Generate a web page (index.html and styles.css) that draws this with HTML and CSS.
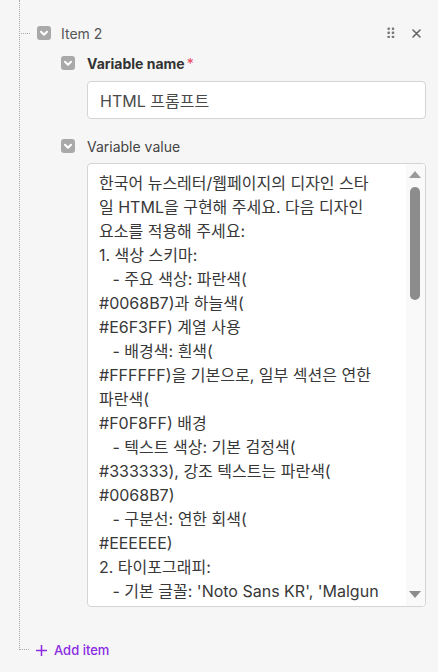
FILE: index.html
```html
<!DOCTYPE html>
<html lang="ko">
<head>
<meta charset="utf-8">
<title>Items</title>
<link rel="stylesheet" href="styles.css">
</head>
<body>
<div class="tree">
  <div class="item">
    <div class="item-head">
      <span class="check"><svg viewBox="0 0 14 14" width="14" height="14"><polyline points="4,5.7 7,8.7 10,5.7" fill="none" stroke="#fff" stroke-width="2" stroke-linecap="round" stroke-linejoin="round"/></svg></span>
      <span class="item-title">Item 2</span>
      <div class="actions">
        <svg class="drag" viewBox="0 0 8 12" width="8" height="12"><g fill="#7a7a7a"><rect x="0.5" y="0.5" width="2.4" height="2.4" rx="0.6"/><rect x="4.8" y="0.5" width="2.4" height="2.4" rx="0.6"/><rect x="0.5" y="4.6" width="2.4" height="2.4" rx="0.6"/><rect x="4.8" y="4.6" width="2.4" height="2.4" rx="0.6"/><rect x="0.5" y="8.7" width="2.4" height="2.4" rx="0.6"/><rect x="4.8" y="8.7" width="2.4" height="2.4" rx="0.6"/></g></svg>
        <svg class="close" viewBox="0 0 9 9" width="9" height="9"><path d="M1 1 L8 8 M8 1 L1 8" stroke="#666" stroke-width="1.6" stroke-linecap="round"/></svg>
      </div>
    </div>
    <div class="item-body">
      <div class="field">
        <div class="field-head">
          <span class="check"><svg viewBox="0 0 14 14" width="14" height="14"><polyline points="4,5.7 7,8.7 10,5.7" fill="none" stroke="#fff" stroke-width="2" stroke-linecap="round" stroke-linejoin="round"/></svg></span>
          <span class="label strong">Variable name<span class="req">*</span></span>
        </div>
        <input class="input" type="text" value="HTML 프롬프트">
      </div>
      <div class="field">
        <div class="field-head">
          <span class="check"><svg viewBox="0 0 14 14" width="14" height="14"><polyline points="4,5.7 7,8.7 10,5.7" fill="none" stroke="#fff" stroke-width="2" stroke-linecap="round" stroke-linejoin="round"/></svg></span>
          <span class="label">Variable value</span>
        </div>
        <div class="ta-wrap">
<textarea class="textarea">한국어 뉴스레터/웹페이지의 디자인 스타
일 HTML을 구현해 주세요. 다음 디자인
요소를 적용해 주세요:
1. 색상 스키마:
   - 주요 색상: 파란색(
#0068B7)과 하늘색(
#E6F3FF) 계열 사용
   - 배경색: 흰색(
#FFFFFF)을 기본으로, 일부 섹션은 연한
파란색(
#F0F8FF) 배경
   - 텍스트 색상: 기본 검정색(
#333333), 강조 텍스트는 파란색(
#0068B7)
   - 구분선: 연한 회색(
#EEEEEE)
2. 타이포그래피:
   - 기본 글꼴: 'Noto Sans KR', 'Malgun
Gothic', sans-serif
   - 제목: 굵게, 파란색
   - 본문: 16px, 줄간격 1.6</textarea>
          <div class="scrollbar" aria-hidden="true">
            <span class="sb-up"></span>
            <span class="sb-thumb"></span>
            <span class="sb-down"></span>
          </div>
        </div>
      </div>
    </div>
  </div>
</div>
<div class="add-row">
  <svg class="plus" viewBox="0 0 11 11" width="11" height="11"><path d="M5.5 0.5 V10.5 M0.5 5.5 H10.5" stroke="#8a2be2" stroke-width="1.5" stroke-linecap="round"/></svg>
  <span class="add-text">Add item</span>
</div>
</body>
</html>
```

FILE: styles.css
```css
* { box-sizing: border-box; }

body {
  margin: 0;
  background: #f6f6f6;
  font-family: Inter, "Noto Sans CJK KR", sans-serif;
  color: #444;
  width: 438px;
  height: 672px;
  overflow: hidden;
}

.tree {
  margin-left: 19px;
  border-left: 1px dotted #a8a8a8;
  padding: 20px 12px 43px 17px;
}

.item-head {
  position: relative;
  display: flex;
  align-items: center;
  height: 26px;
}

.item-head::before {
  content: "";
  position: absolute;
  left: -16px;
  top: 13px;
  width: 9px;
  border-top: 1px dotted #a8a8a8;
}

.check {
  flex: none;
  width: 14px;
  height: 14px;
  border-radius: 3px;
  background: #a9a9a9;
  display: flex;
}

.item-title {
  margin-left: 10px;
  font-size: 14px;
  color: #555;
}

.actions {
  margin-left: auto;
  margin-right: 5px;
  display: flex;
  align-items: center;
  gap: 17px;
}

.drag { display: block; }
.close { display: block; }

.item-body {
  padding-left: 24px;
  padding-top: 4px;
  display: flex;
  flex-direction: column;
  gap: 14px;
}

.field-head {
  display: flex;
  align-items: center;
  height: 26px;
  gap: 12px;
}

.label {
  font-size: 14px;
  color: #444;
}

.label.strong {
  font-weight: 700;
  color: #333;
}

.req {
  color: #e8455f;
  font-weight: 400;
  margin-left: 2px;
}

.input {
  display: block;
  margin: 5px 0 0 26px;
  width: 339px;
  height: 38px;
  border: 1px solid #d4d4d4;
  border-radius: 4px;
  background: #fff;
  padding: 0 12px;
  font-family: Inter, "Noto Sans CJK KR", sans-serif;
  font-size: 16px;
  color: #4a4a4a;
  outline: none;
}

.ta-wrap {
  position: relative;
  margin: 4px 0 0 26px;
  width: 339px;
  height: 444px;
}

.textarea {
  display: block;
  width: 100%;
  height: 100%;
  border: 1px solid #d4d4d4;
  border-radius: 4px;
  background: #fff;
  padding: 7px 24px 7px 11px;
  font-family: Inter, "Noto Sans CJK KR", sans-serif;
  font-size: 16px;
  line-height: 24px;
  color: #383838;
  white-space: pre;
  overflow: hidden;
  resize: none;
  outline: none;
}

.scrollbar {
  position: absolute;
  top: 1px;
  right: 1px;
  bottom: 1px;
  width: 19px;
  background: #f9f9f9;
  border-radius: 0 3px 3px 0;
}

.sb-up, .sb-down {
  position: absolute;
  left: 3px;
  width: 0;
  height: 0;
  border-left: 6px solid transparent;
  border-right: 6px solid transparent;
}

.sb-up {
  top: 7px;
  border-bottom: 7px solid #9a9a9a;
}

.sb-down {
  bottom: 8px;
  border-top: 7px solid #8c8c8c;
}

.sb-thumb {
  position: absolute;
  left: 4px;
  top: 23px;
  width: 10px;
  height: 113px;
  border-radius: 5px;
  background: #8c8c8c;
}

.add-row {
  position: relative;
  display: flex;
  align-items: center;
  height: 20px;
  margin-top: -10px;
  padding-left: 36px;
  gap: 7px;
}

.add-row::before {
  content: "";
  position: absolute;
  left: 20px;
  top: 9px;
  width: 9px;
  border-top: 1px dotted #a8a8a8;
}

.plus { display: block; }

.add-text {
  font-size: 13px;
  font-weight: 500;
  color: #8a2be2;
}
```
